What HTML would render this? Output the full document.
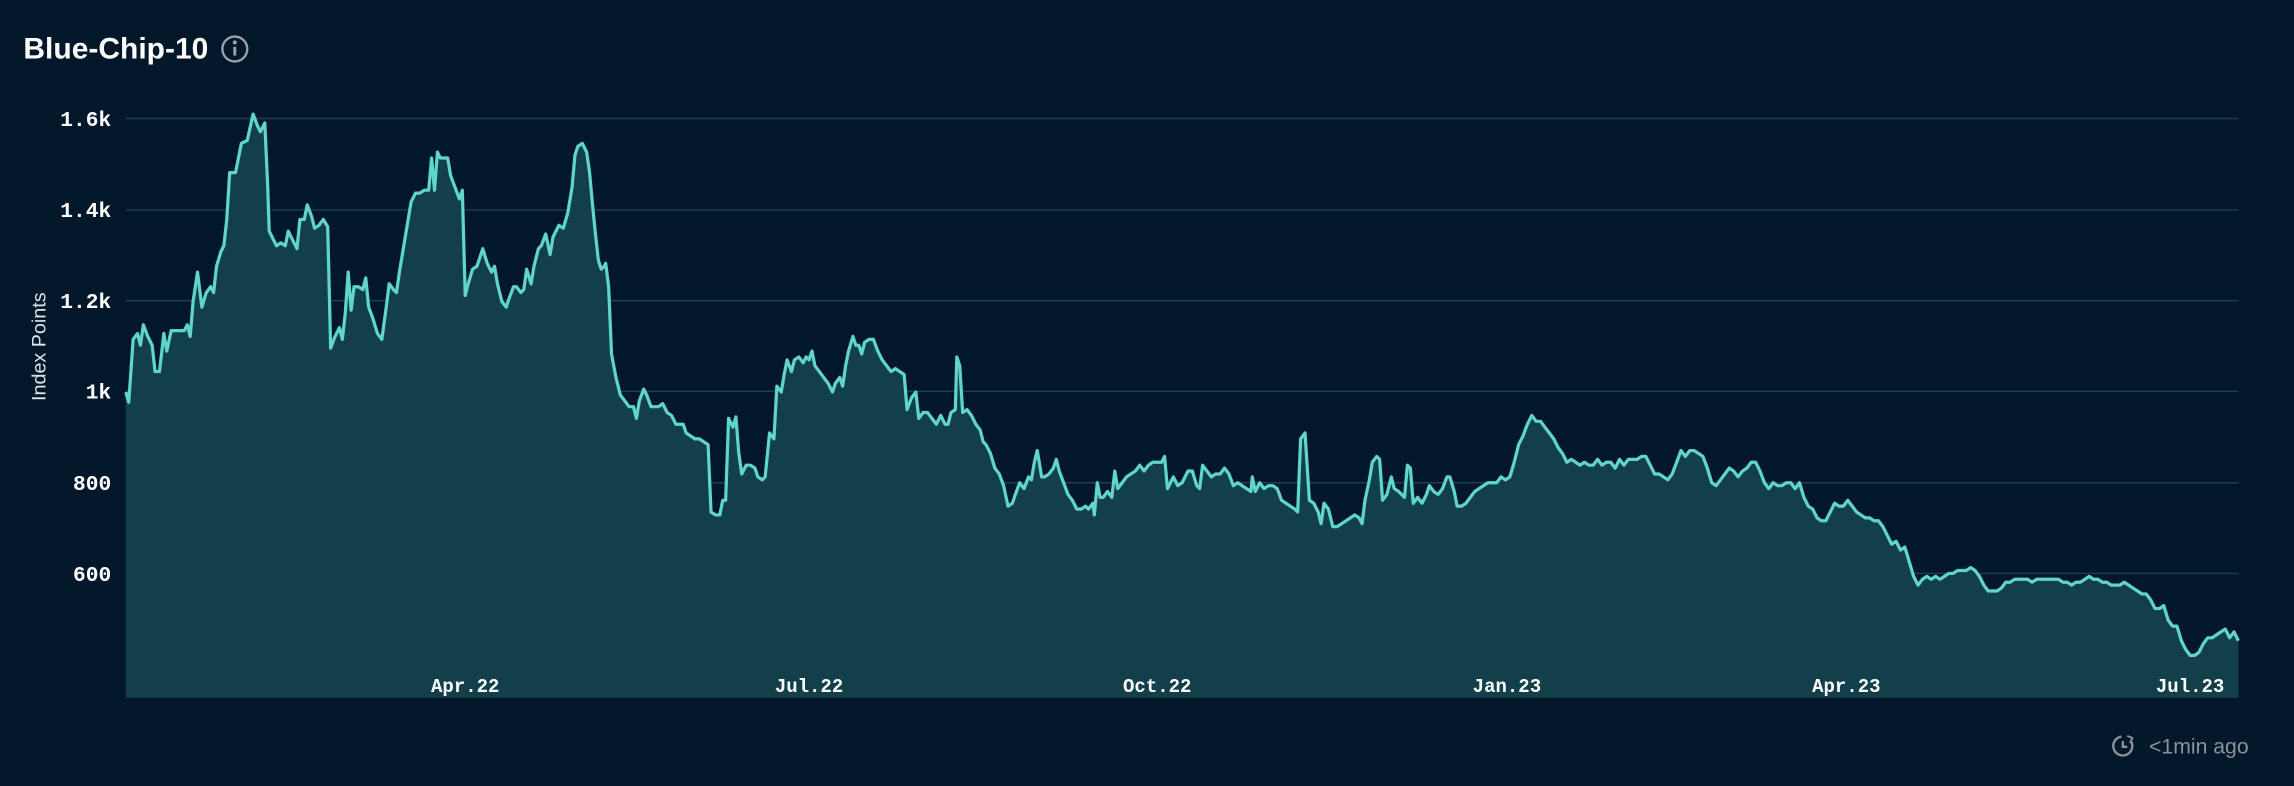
<!DOCTYPE html>
<html><head><meta charset="utf-8"><style>
html,body{margin:0;padding:0;background:#02182a;width:2294px;height:786px;overflow:hidden}
svg{display:block}
</style></head><body>
<svg width="2294" height="786" viewBox="0 0 1568 537.3" preserveAspectRatio="none" xmlns="http://www.w3.org/2000/svg">
<rect x="0" y="0" width="1568" height="537.3" fill="#02182a"/>
<text x="16" y="40" font-family="Liberation Sans, sans-serif" font-size="20.5" font-weight="bold" fill="#ffffff">Blue-Chip-10</text>
<g transform="translate(160.5,33.5)" fill="none" stroke="#9aa1a9" stroke-width="1.6"><circle r="8.5"/><line x1="0" y1="-1.5" x2="0" y2="4.5" stroke-width="2"/><circle cx="0" cy="-4.5" r="0.6" fill="#9aa1a9"/></g>
<g stroke="#1d3f55" stroke-width="1">
<line x1="86" y1="81" x2="1530" y2="81"/><line x1="86" y1="143.5" x2="1530" y2="143.5"/><line x1="86" y1="205.5" x2="1530" y2="205.5"/><line x1="86" y1="267.5" x2="1530" y2="267.5"/><line x1="86" y1="330" x2="1530" y2="330"/><line x1="86" y1="392" x2="1530" y2="392"/>
</g>
<g font-family="Liberation Mono, monospace" font-size="14.5" font-weight="bold" fill="#ffffff" text-anchor="end">
<text x="76" y="86">1.6k</text><text x="76" y="148.5">1.4k</text><text x="76" y="210.5">1.2k</text><text x="76" y="272.5">1k</text><text x="76" y="335">800</text><text x="76" y="397">600</text>
</g>
<text transform="translate(31,237) rotate(-90)" font-family="Liberation Sans, sans-serif" font-size="13.5" fill="#dfe4e8" text-anchor="middle">Index Points</text>
<polygon id="area" fill="#133f4b" points=""/>
<polyline id="ln" fill="none" stroke="#5fd6c8" stroke-width="2.2" stroke-linejoin="round" points=""/>
<g font-family="Liberation Mono, monospace" font-size="13" font-weight="bold" fill="#ffffff" text-anchor="middle">
<text x="318" y="473">Apr.22</text><text x="553" y="473">Jul.22</text><text x="791" y="473">Oct.22</text><text x="1030" y="473">Jan.23</text><text x="1262" y="473">Apr.23</text><text x="1497" y="473">Jul.23</text>
</g>
<g transform="translate(1451,510)" fill="none" stroke="#8a939c" stroke-width="1.6"><path d="M5.5 -3.5 A6.5 6.5 0 1 1 -1 -6.5"/><path d="M0 -3.5 V0.5 H3"/><path d="M3 -7 L6.5 -5.5 L5 -2" stroke-width="1.3"/></g>
<text x="1537" y="515" font-family="Liberation Sans, sans-serif" font-size="14.5" fill="#8a939c" text-anchor="end">&lt;1min ago</text>
</svg>
<script>
var p="86,268 88,275 91,232 94,228 96,236 98,222 101,230 104,236 106,254 109,254 112,228 114,240 117,226 120,226 123,226 126,226 128,222 130,230 132,206 135,186 138,210 141,200 144,196 146,200 148,182 151,172 153,168 155,150 157,118 161,118 165,98 169,96 173,78 176,86 178,90 181,84 183,128 184,158 187,164 189,168 192,166 195,168 197,158 200,164 203,170 205,150 208,150 210,140 213,148 215,156 218,154 221,150 224,155 226,238 229,230 232,224 234,232 236,214 238,186 240,212 242,196 245,196 248,198 250,190 252,210 255,218 258,228 261,232 264,210 266,194 269,198 271,200 273,186 276,168 278,156 281,138 284,132 287,132 290,130 293,130 295,108 297,130 299,104 301,108 304,108 306,108 308,120 311,128 314,136 316,130 318,202 320,194 323,184 326,182 328,176 330,170 333,180 336,186 338,182 340,194 343,206 346,210 348,204 351,196 353,196 356,200 358,198 360,184 363,194 365,182 368,170 370,168 373,160 376,174 378,162 380,158 382,154 385,156 388,146 391,128 393,106 395,100 398,98 401,104 403,118 405,140 407,160 409,178 411,184 413,182 414,180 416,196 418,242 421,258 424,270 427,274 430,278 433,278 435,286 437,274 440,266 442,270 445,278 448,278 450,278 453,276 456,282 459,284 462,290 465,290 467,290 469,296 472,298 475,300 478,300 481,302 484,304 486,350 489,352 492,352 494,342 496,342 498,286 501,292 503,285 505,310 507,324 510,318 513,318 516,320 518,326 521,328 523,326 526,296 529,300 531,264 534,268 536,256 538,246 541,254 543,246 546,244 549,248 551,244 553,246 555,240 557,250 560,254 563,258 566,262 569,268 571,262 574,258 576,264 578,250 580,240 583,230 585,236 587,236 589,242 591,234 594,232 597,232 600,240 603,246 606,250 609,254 612,252 615,254 618,256 620,280 623,272 626,268 628,286 631,282 634,282 637,286 640,290 643,284 646,290 648,290 650,282 653,280 654,244 656,250 658,282 661,280 664,284 667,290 670,294 672,302 674,304 677,310 680,320 683,324 686,332 689,346 692,344 694,338 697,330 700,334 703,326 705,328 707,316 709,308 712,326 714,326 717,324 720,320 722,314 724,322 727,330 730,338 733,342 736,348 739,348 742,346 744,348 747,344 748,352 750,330 752,340 754,340 757,336 760,340 762,322 764,334 767,330 770,326 773,324 776,322 779,318 782,322 785,318 788,316 791,316 794,316 796,312 798,334 800,330 802,326 805,332 808,330 810,326 812,322 815,322 818,332 820,334 822,318 825,322 828,326 831,324 834,324 837,320 840,324 843,332 846,330 849,332 852,334 855,336 856,326 858,336 861,330 864,334 867,332 870,332 873,334 876,342 879,344 882,346 885,348 887,350 889,300 892,296 895,342 898,344 901,350 903,358 905,344 908,348 911,360 914,360 917,358 920,356 923,354 926,352 929,354 931,358 933,342 936,328 938,316 941,312 943,314 945,342 948,338 951,326 953,334 956,336 958,338 960,340 962,318 964,320 966,344 969,340 972,344 975,338 977,332 980,336 983,338 986,334 989,326 991,326 994,336 996,346 999,346 1002,344 1005,340 1008,336 1011,334 1014,332 1017,330 1020,330 1023,330 1026,326 1029,328 1032,326 1035,316 1038,304 1041,298 1044,290 1047,284 1050,288 1053,288 1056,292 1059,296 1062,300 1065,306 1068,310 1071,316 1074,314 1077,316 1080,318 1083,316 1086,318 1089,318 1092,314 1095,318 1098,316 1101,316 1104,320 1107,314 1110,318 1113,314 1116,314 1119,314 1122,312 1125,312 1128,318 1131,324 1134,324 1137,326 1140,328 1143,324 1146,316 1149,308 1152,312 1155,308 1158,308 1161,310 1164,312 1167,320 1170,330 1173,332 1176,328 1179,324 1182,320 1185,322 1188,326 1191,322 1194,320 1197,316 1200,316 1203,322 1206,330 1209,334 1212,330 1215,332 1218,332 1221,330 1224,330 1227,334 1230,330 1233,340 1236,346 1239,348 1242,354 1245,356 1248,356 1251,350 1254,344 1257,346 1260,346 1263,342 1266,346 1269,350 1272,352 1275,354 1278,354 1281,356 1284,356 1287,360 1290,366 1293,372 1296,370 1299,376 1302,374 1305,384 1308,394 1311,400 1314,396 1317,394 1320,396 1323,394 1326,396 1329,394 1332,392 1335,392 1338,390 1341,390 1344,390 1347,388 1350,390 1353,394 1356,400 1359,404 1362,404 1365,404 1368,402 1371,398 1374,398 1377,396 1380,396 1383,396 1386,396 1389,398 1392,396 1395,396 1398,396 1401,396 1404,396 1407,396 1410,398 1413,398 1416,400 1419,398 1422,398 1425,396 1428,394 1431,396 1434,396 1437,398 1440,398 1443,400 1446,400 1449,400 1452,398 1455,400 1458,402 1461,404 1464,406 1467,406 1470,410 1473,416 1476,416 1479,414 1482,424 1485,428 1488,428 1491,438 1494,444 1497,448 1500,448 1503,446 1506,440 1509,436 1512,436 1515,434 1518,432 1521,430 1524,436 1527,432 1530,438";
document.getElementById('ln').setAttribute('points',p);
document.getElementById('area').setAttribute('points',p+" 1530,477 86,477");
</script>
</body></html>
